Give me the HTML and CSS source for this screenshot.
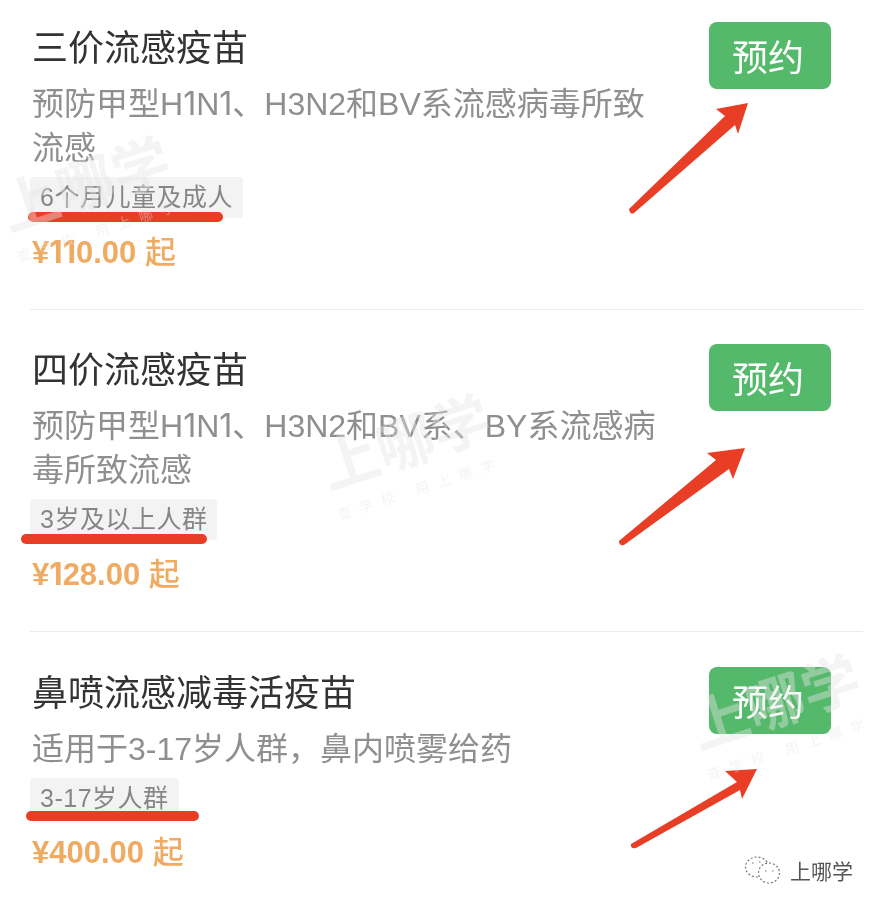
FILE: index.html
```html
<!DOCTYPE html>
<html lang="zh-CN">
<head>
  <meta charset="UTF-8" />
  <title>流感疫苗预约</title>
  <link rel="stylesheet" href="styles.css">
</head>
<body>
  <div class="pagina">
    <div class="vacina primeira">
      <div class="info">
        <h3>三价流感疫苗</h3>
        <p class="descricao">预防甲型H<span class="um">1</span>N<span class="um">1</span>、H3N2和BV系流感病毒所致<br>流感</p>
        <span class="grupo">6个月儿童及成人<i class="risco risco1"></i></span>
        <p class="preco">¥<span class="um">1</span><span class="um">1</span>0.00 <span class="ate">起</span></p>
      </div>
      <button class="reservar">预约</button>
    </div>

    <div class="vacina">
      <div class="info">
        <h3>四价流感疫苗</h3>
        <p class="descricao">预防甲型H<span class="um">1</span>N<span class="um">1</span>、H3N2和BV系、BY系流感病<br>毒所致流感</p>
        <span class="grupo">3岁及以上人群<i class="risco risco2"></i></span>
        <p class="preco">¥<span class="um">1</span>28.00 <span class="ate">起</span></p>
      </div>
      <button class="reservar">预约</button>
    </div>

    <div class="vacina ultima">
      <div class="info">
        <h3>鼻喷流感减毒活疫苗</h3>
        <p class="descricao">适用于3-17岁人群，鼻内喷雾给药</p>
        <span class="grupo">3-17岁人群<i class="risco risco3"></i></span>
        <p class="preco">¥400.00 <span class="ate">起</span></p>
      </div>
      <button class="reservar">预约</button>
    </div>

    <!-- setas vermelhas desenhadas por cima da captura -->
    <svg class="setas" width="879" height="909" viewBox="0 0 879 909">
      <path d="M629 209 L725 116 L716 109 L748 103 L738 134 L735 125 L634 213 Q630 215 629 209 Z" />
      <path d="M619 541 L716 460 L707 453 L745 448 L733 479 L729 469 L624 545 Q619 546 619 541 Z" />
      <path d="M631 844 L737 782 L725 771 L757 769 L742 799 L740 790 L636 848 Q630 849 631 844 Z" />
    </svg>

    <div class="marca marca1">上哪学<small>查学校 用上哪学</small></div>
    <div class="marca marca2">上哪学<small>查学校 用上哪学</small></div>
    <div class="marca marca3">上哪学<small>查学校 用上哪学</small></div>

    <div class="conta">
      <svg width="38" height="30" viewBox="0 0 38 30">
        <ellipse cx="13" cy="12" rx="11.5" ry="10" />
        <ellipse cx="25" cy="18" rx="10.5" ry="10" fill="#fff" />
        <path d="M8 8h1.5M15 7h1.5M21 16h1.5M28 16h1.5" />
      </svg>
      <span>上哪学</span>
    </div>
  </div>
</body>
</html>
```

FILE: styles.css
```css
body {
  margin: 0;
  background-color: #fff;
  font-family: "Liberation Sans", "Noto Sans CJK SC", sans-serif;
}

.pagina {
  position: relative;
  width: 879px;
  height: 909px;
  overflow: hidden;
  filter: blur(0.6px);
}

.vacina {
  display: flex;
  justify-content: space-between;
  align-items: flex-start;
  height: 287px;
  margin: 0 16px 0 30px;
  padding: 34px 32px 0 2px;
  border-top: 1px solid #ececec;
}

.vacina.primeira {
  padding-top: 22px;
  border-top: none;
}

.vacina.ultima {
  padding-top: 35px;
}

.info {
  padding-top: 5px;
}

h3 {
  margin: 0;
  font-size: 36px;
  line-height: 44px;
  font-weight: 400;
  color: #333;
}

.descricao {
  margin: 11px 0 0;
  font-size: 32px;
  line-height: 44px;
  color: #8f8f8f;
  white-space: nowrap;
}

/* o "1" do Inter e mais estreito, como na captura */
.um {
  font-family: Inter, sans-serif;
}

.grupo {
  position: relative;
  display: inline-block;
  margin: 7px 0 0 -2px;
  padding: 0 10px;
  font-size: 25px;
  letter-spacing: 0.5px;
  line-height: 41px;
  color: #868686;
  background-color: #f3f3f3;
  border-radius: 4px;
}

.risco {
  position: absolute;
  height: 10px;
  background-color: #e93e26;
  border-radius: 5px;
}

.risco1 { left: -2px; top: 35px; width: 195px; }
.risco2 { left: -9px; top: 35px; width: 186px; }
.risco3 { left: -4px; top: 33px; width: 173px; }

.preco {
  margin: 12px 0 0;
  font-size: 31px;
  line-height: 44px;
  font-weight: 700;
  color: #f0ab62;
}

.ate {
  font-weight: 500;
}

.reservar {
  width: 122px;
  height: 67px;
  padding: 0 4px 2px 0;
  font-family: inherit;
  font-size: 36px;
  color: #fff;
  background-color: #55b96b;
  border: none;
  border-radius: 8px;
}

.setas {
  position: absolute;
  left: 0;
  top: 0;
  fill: #e93e26;
}

.marca {
  position: absolute;
  display: flex;
  flex-direction: column;
  align-items: center;
  width: 176px;
  font-size: 58px;
  line-height: 66px;
  font-weight: 700;
  white-space: nowrap;
  color: rgba(228, 228, 228, 0.42);
  transform: rotate(-18deg);
  pointer-events: none;
}

.marca small {
  font-size: 14px;
  line-height: 28px;
  font-weight: 400;
  letter-spacing: 9px;
}

.marca1 { left: 2px; top: 152px; }
.marca2 { left: 322px; top: 410px; }
.marca3 { left: 692px; top: 670px; }

.conta {
  position: absolute;
  left: 744px;
  top: 855px;
  display: flex;
  align-items: center;
  gap: 8px;
  font-size: 21px;
  color: #555;
}

.conta svg {
  fill: none;
  stroke: #777;
  stroke-width: 1.2;
  stroke-dasharray: 2 2;
}
```
